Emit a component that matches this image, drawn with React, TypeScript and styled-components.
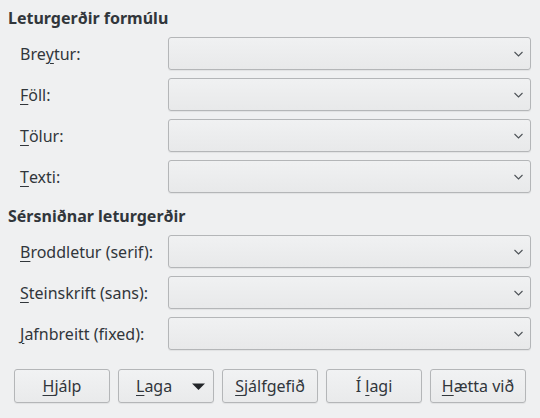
import styled, { createGlobalStyle } from "styled-components"

const GlobalStyle = createGlobalStyle`
  html, body {
    margin: 0;
    background: #eff0f1;
  }
  body {
    font-family: "Noto Sans", "DejaVu Sans", sans-serif;
    font-size: 16px;
    color: #31363b;
  }
`

const Dialog = styled.div`
  width: 540px;
  height: 418px;
  box-sizing: border-box;
  padding: 7px 9px 0 8px;
  display: flex;
  flex-direction: column;
`

const SectionTitle = styled.h2`
  margin: 0;
  font-size: 16px;
  font-weight: 700;
  line-height: 22px;
  height: 22px;
`

const Grid = styled.div`
  display: grid;
  grid-template-columns: 148px 1fr;
  row-gap: 8px;
  margin: 8px 0 0 12px;
`

const Label = styled.label`
  display: flex;
  align-items: center;
  height: 33px;
  line-height: 22px;
`

const Mnemonic = styled.span`
  text-decoration: underline;
  text-underline-offset: 3px;
  text-decoration-thickness: 1px;
`

const Combo = styled.div`
  height: 33px;
  box-sizing: border-box;
  border: 1px solid #b4b6b8;
  border-radius: 3px;
  background: linear-gradient(#f0f1f2, #e8e9ea);
  box-shadow: 0 1px 1px rgba(0, 0, 0, 0.06);
  display: flex;
  align-items: center;
  justify-content: flex-end;
  padding-right: 7px;
`

const Footer = styled.div`
  display: flex;
  gap: 8px;
  margin-top: auto;
  margin-bottom: 15px;
  padding-left: 6px;
`

const Button = styled.div<{ $menu?: boolean }>`
  width: 96px;
  height: 34px;
  box-sizing: border-box;
  border: 1px solid #b4b6b8;
  border-radius: 3px;
  background: linear-gradient(#f1f2f3, #e9eaeb);
  box-shadow: 0 1px 1px rgba(0, 0, 0, 0.06);
  display: flex;
  align-items: center;
  justify-content: ${({ $menu }) => ($menu ? "space-between" : "center")};
  padding: ${({ $menu }) => ($menu ? "0 8px 0 17px" : "0")};
  line-height: 22px;
`

const Spacer = styled.div`
  height: 12px;
`

const Chevron = () => (
  <svg width="9" height="6" viewBox="0 0 9 6">
    <path d="M0.5 1 L4.5 5 L8.5 1" fill="none" stroke="#4d5257" strokeWidth="1.1" />
  </svg>
)

const Triangle = () => (
  <svg width="13" height="7" viewBox="0 0 13 7">
    <path d="M0 0.5 H13 L6.5 7 Z" fill="#232629" />
  </svg>
)

type Row = { pre: string; key: string; post: string }

const formulaRows: Row[] = [
  { pre: "Bre", key: "y", post: "tur:" },
  { pre: "", key: "F", post: "öll:" },
  { pre: "", key: "T", post: "ölur:" },
  { pre: "", key: "T", post: "exti:" },
]

const customRows: Row[] = [
  { pre: "", key: "B", post: "roddletur (serif):" },
  { pre: "", key: "S", post: "teinskrift (sans):" },
  { pre: "", key: "J", post: "afnbreitt (fixed):" },
]

function Rows({ rows }: { rows: Row[] }) {
  return (
    <Grid>
      {rows.flatMap((r, i) => [
        <Label key={"l" + i}>
          {r.pre}
          <Mnemonic>{r.key}</Mnemonic>
          {r.post}
        </Label>,
        <Combo key={"c" + i}>
          <Chevron />
        </Combo>,
      ])}
    </Grid>
  )
}

export default function App() {
  return (
    <>
      <GlobalStyle />
      <Dialog>
        <SectionTitle>Leturgerðir formúlu</SectionTitle>
        <Rows rows={formulaRows} />
        <Spacer />
        <SectionTitle>Sérsniðnar leturgerðir</SectionTitle>
        <Rows rows={customRows} />
        <Footer>
          <Button>
            <span>
              <Mnemonic>H</Mnemonic>jálp
            </span>
          </Button>
          <Button $menu>
            <span>
              <Mnemonic>L</Mnemonic>aga
            </span>
            <Triangle />
          </Button>
          <Button>
            <span>
              <Mnemonic>S</Mnemonic>jálfgefið
            </span>
          </Button>
          <Button>
            <span>
              Í <Mnemonic>l</Mnemonic>agi
            </span>
          </Button>
          <Button>
            <span>
              <Mnemonic>H</Mnemonic>ætta við
            </span>
          </Button>
        </Footer>
      </Dialog>
    </>
  )
}
